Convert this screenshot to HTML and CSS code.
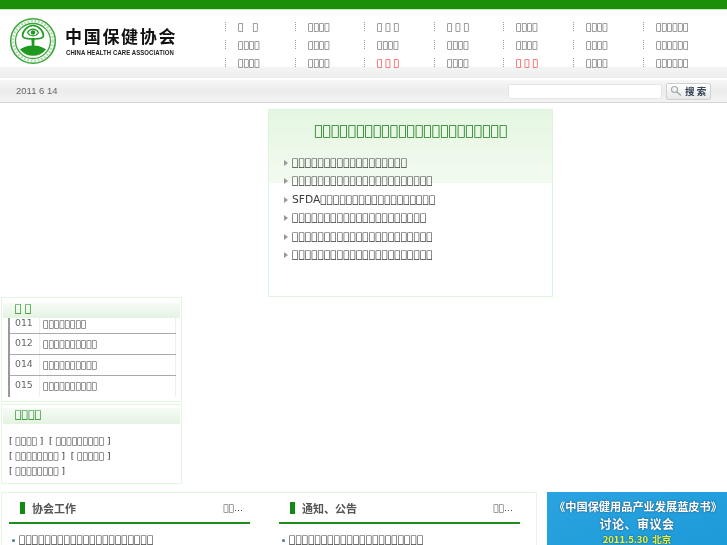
FILE: index.html
```html
<!DOCTYPE html>
<html lang="zh">
<head>
<meta charset="utf-8">
<title>中国保健协会</title>
<link rel="stylesheet" href="styles.css">
</head>
<body>
<div class="topbar"></div>
<header class="masthead">
  <div class="logo">
    <svg class="seal" width="48" height="48" viewBox="0 0 48 48">
      <circle cx="24" cy="24" r="22.300" fill="none" stroke="#3aa53a" stroke-width="1.600"/>
      <circle cx="24" cy="24" r="17.500" fill="none" stroke="#3aa53a" stroke-width="1.300"/>
      <circle cx="24" cy="24" r="19.900" fill="none" stroke="#b5deb5" stroke-width="2.600" stroke-dasharray="2 1.500"/>
      <path d="M11 32.500c5-3.500 9-4 13-4s8 .5 13 4a16.500 16.500 0 0 1-26 0z" fill="#1f9a1f"/>
      <path d="M22.300 21h3.400l-1 15h-1.400z" fill="#1f9a1f"/>
      <path d="M23 22c-5 0-9.500-.5-9.500-3.500c0-4.500 5-10 10.500-10s10.500 5.500 10.500 10c0 3-4.500 3.500-9.500 3.500" fill="none" stroke="#1f9a1f" stroke-width="1.700"/>
      <path d="M18.500 15.500c1.500-2.500 3.500-3.300 5.500-3.300s4 .8 5.500 3.300c-1.500 2.500-3.500 3.300-5.500 3.300s-4-.8-5.500-3.300z" fill="none" stroke="#1f9a1f" stroke-width="1.200"/>
      <circle cx="24" cy="15.500" r="2.200" fill="#1f9a1f"/>
    </svg>
    <div class="logo-words">
      <div class="logo-cn">中国保健协会</div>
      <div class="logo-en">CHINA HEALTH CARE ASSOCIATION</div>
    </div>
  </div>
  <nav class="nav">
    <a>&#xE000;&#8195;&#xE000;</a><a>&#xE000;&#xE000;&#xE000;&#xE000;</a><a>&#xE000; &#xE000; &#xE000;</a><a>&#xE000; &#xE000; &#xE000;</a><a>&#xE000;&#xE000;&#xE000;&#xE000;</a><a>&#xE000;&#xE000;&#xE000;&#xE000;</a><a>&#xE000;&#xE000;&#xE000;&#xE000;&#xE000;&#xE000;</a>
    <a>&#xE000;&#xE000;&#xE000;&#xE000;</a><a>&#xE000;&#xE000;&#xE000;&#xE000;</a><a>&#xE000;&#xE000;&#xE000;&#xE000;</a><a>&#xE000;&#xE000;&#xE000;&#xE000;</a><a>&#xE000;&#xE000;&#xE000;&#xE000;</a><a>&#xE000;&#xE000;&#xE000;&#xE000;</a><a>&#xE000;&#xE000;&#xE000;&#xE000;&#xE000;&#xE000;</a>
    <a>&#xE000;&#xE000;&#xE000;&#xE000;</a><a>&#xE000;&#xE000;&#xE000;&#xE000;</a><a class="hot">&#xE000; &#xE000; &#xE000;</a><a>&#xE000;&#xE000;&#xE000;&#xE000;</a><a class="hot">&#xE000; &#xE000; &#xE000;</a><a>&#xE000;&#xE000;&#xE000;&#xE000;</a><a>&#xE000;&#xE000;&#xE000;&#xE000;&#xE000;&#xE000;</a>
  </nav>
</header>
<div class="datebar">
  <span class="date">2011 6 14</span>
  <input class="search" type="text">
  <button class="search-btn">
    <svg width="12" height="12" viewBox="0 0 12 12"><circle cx="4.500" cy="4.500" r="3" fill="none" stroke="#9aa8a8" stroke-width="1.100"/><path d="M7 7l4 3.500" stroke="#9aa8a8" stroke-width="1.500"/></svg>
    <span>搜 索</span>
  </button>
</div>
<section class="feature">
  <h1>&#xE000;&#xE000;&#xE000;&#xE000;&#xE000;&#xE000;&#xE000;&#xE000;&#xE000;&#xE000;&#xE000;&#xE000;&#xE000;&#xE000;&#xE000;&#xE000;&#xE000;&#xE000;&#xE000;&#xE000;&#xE000;&#xE000;&#xE000;</h1>
  <ul>
    <li>&#xE000;&#xE000;&#xE000;&#xE000;&#xE000;&#xE000;&#xE000;&#xE000;&#xE000;&#xE000;&#xE000;&#xE000;&#xE000;&#xE000;&#xE000;&#xE000;&#xE000;&#xE000;</li>
    <li>&#xE000;&#xE000;&#xE000;&#xE000;&#xE000;&#xE000;&#xE000;&#xE000;&#xE000;&#xE000;&#xE000;&#xE000;&#xE000;&#xE000;&#xE000;&#xE000;&#xE000;&#xE000;&#xE000;&#xE000;&#xE000;&#xE000;</li>
    <li>SFDA&#xE000;&#xE000;&#xE000;&#xE000;&#xE000;&#xE000;&#xE000;&#xE000;&#xE000;&#xE000;&#xE000;&#xE000;&#xE000;&#xE000;&#xE000;&#xE000;&#xE000;&#xE000;</li>
    <li>&#xE000;&#xE000;&#xE000;&#xE000;&#xE000;&#xE000;&#xE000;&#xE000;&#xE000;&#xE000;&#xE000;&#xE000;&#xE000;&#xE000;&#xE000;&#xE000;&#xE000;&#xE000;&#xE000;&#xE000;&#xE000;</li>
    <li>&#xE000;&#xE000;&#xE000;&#xE000;&#xE000;&#xE000;&#xE000;&#xE000;&#xE000;&#xE000;&#xE000;&#xE000;&#xE000;&#xE000;&#xE000;&#xE000;&#xE000;&#xE000;&#xE000;&#xE000;&#xE000;&#xE000;</li>
    <li>&#xE000;&#xE000;&#xE000;&#xE000;&#xE000;&#xE000;&#xE000;&#xE000;&#xE000;&#xE000;&#xE000;&#xE000;&#xE000;&#xE000;&#xE000;&#xE000;&#xE000;&#xE000;&#xE000;&#xE000;&#xE000;&#xE000;</li>
  </ul>
</section>
<aside class="side">
  <div class="panel panel-phones">
    <h2>&#xE000; &#xE000;</h2>
    <table>
      <tr><td class="code">011</td><td>&#xE000;&#xE000;&#xE000;&#xE000;&#xE000;&#xE000;&#xE000;&#xE000;</td></tr>
      <tr><td class="code">012</td><td>&#xE000;&#xE000;&#xE000;&#xE000;&#xE000;&#xE000;&#xE000;&#xE000;&#xE000;&#xE000;</td></tr>
      <tr><td class="code">014</td><td>&#xE000;&#xE000;&#xE000;&#xE000;&#xE000;&#xE000;&#xE000;&#xE000;&#xE000;&#xE000;</td></tr>
      <tr><td class="code">015</td><td>&#xE000;&#xE000;&#xE000;&#xE000;&#xE000;&#xE000;&#xE000;&#xE000;&#xE000;&#xE000;</td></tr>
    </table>
  </div>
  <div class="panel panel-links">
    <h2>&#xE000;&#xE000;&#xE000;&#xE000;</h2>
    <p>[ &#xE000;&#xE000;&#xE000;&#xE000; ] &nbsp;[ &#xE000;&#xE000;&#xE000;&#xE000;&#xE000;&#xE000;&#xE000;&#xE000;&#xE000; ]</p>
    <p>[ &#xE000;&#xE000;&#xE000;&#xE000;&#xE000;&#xE000;&#xE000;&#xE000; ] &nbsp;[ &#xE000;&#xE000;&#xE000;&#xE000;&#xE000; ]</p>
    <p>[ &#xE000;&#xE000;&#xE000;&#xE000;&#xE000;&#xE000;&#xE000;&#xE000; ]</p>
  </div>
</aside>
<section class="lower">
  <div class="news">
    <div class="news-col">
      <div class="news-head"><i></i><b>协会工作</b><span>&#xE000;&#xE000;…</span></div>
      <div class="news-item">&#xE000;&#xE000;&#xE000;&#xE000;&#xE000;&#xE000;&#xE000;&#xE000;&#xE000;&#xE000;&#xE000;&#xE000;&#xE000;&#xE000;&#xE000;&#xE000;&#xE000;&#xE000;&#xE000;&#xE000;&#xE000;</div>
    </div>
    <div class="news-col">
      <div class="news-head"><i></i><b>通知、公告</b><span>&#xE000;&#xE000;…</span></div>
      <div class="news-item">&#xE000;&#xE000;&#xE000;&#xE000;&#xE000;&#xE000;&#xE000;&#xE000;&#xE000;&#xE000;&#xE000;&#xE000;&#xE000;&#xE000;&#xE000;&#xE000;&#xE000;&#xE000;&#xE000;&#xE000;&#xE000;</div>
    </div>
  </div>
  <div class="banner">
    <div class="banner-1">《中国保健用品产业发展蓝皮书》</div>
    <div class="banner-2">讨论、审议会</div>
    <div class="banner-3">2011.5.30&nbsp; 北京</div>
  </div>
</section>
</body>
</html>
```

FILE: styles.css
```css
html, body { margin: 0; padding: 0; height: 545px; overflow: hidden; }
html { background: #fff; }
body { font-family: "DejaVu Sans", sans-serif; font-size: 12px; color: #333; will-change: transform; }

.topbar { height: 9px; background: #1b8f08; border-bottom: 1px solid #c8efc0; }

.masthead { height: 68px; display: flex; background: linear-gradient(#fff 0, #fff 56px, #f3f5f4 57px, #ededed 68px); }
.logo { width: 225px; display: flex; padding: 7px 0 0 9px; box-sizing: border-box; gap: 8px; }
.seal { flex: none; }
.logo-words { padding-top: 8px; }
.logo-cn { font-family: "Noto Sans CJK SC", sans-serif; font-weight: 700; font-size: 17px; letter-spacing: 1.700px; line-height: 22px; color: #111; white-space: nowrap; }
.logo-en { font-family: "Liberation Sans", sans-serif; font-weight: 700; font-size: 8px; line-height: 10px; color: #222; white-space: nowrap; transform-origin: 0 0; transform: scaleX(.75); margin: 1px 0 0 1px; letter-spacing: .1px; }

.nav { flex: 1; display: grid; grid-template-columns: 70px 69px 70px 69px 70px 70px 70px; grid-auto-rows: 18px; padding-top: 8px; font-size: 9px; color: #444; }
.nav a { display: flex; align-items: center; padding-left: 13px; position: relative; white-space: pre; }
.nav a::before { content: ""; position: absolute; left: 0; top: 4px; height: 9px; border-left: 1px dotted #999; }
.nav a.hot { color: #f00; }

.datebar { height: 22px; margin-top: 2px; border-bottom: 1px solid #d5d5d5; display: flex; align-items: center; background: linear-gradient(#f7f7f7, #ececec 50%, #f4f4f4); }
.date { font-family: "Liberation Sans", sans-serif; font-size: 9.500px; color: #666; margin: 0 0 2px 16px; flex: 1; }
.search { width: 154px; height: 15px; box-sizing: border-box; border: 1px solid #e6e6e6; border-radius: 2px; background: #fff; padding: 0; margin: 0; }
.search-btn { width: 45px; height: 17px; margin: 0 16px 0 4px; padding: 0 0 0 3px; border: 1px solid #d0d0d0; border-radius: 2px; background: linear-gradient(#fff, #e8e8e8); display: flex; align-items: center; gap: 3px; font-family: "Noto Sans CJK SC", sans-serif; font-size: 9.500px; font-weight: 700; color: #345; }

.feature { width: 285px; height: 188px; box-sizing: border-box; position: absolute; left: 268px; top: 109px; border: 1px solid #dff4dd; background: linear-gradient(#e4f6e1, #f3fbf1 73px, #fff 73px); }
.feature h1 { margin: 10px 0 0; text-align: center; font-size: 14px; line-height: 20px; font-weight: 400; color: #1a7a1a; }
.feature ul { list-style: none; margin: 14px 0 0; padding: 0 0 0 23px; font-size: 10.670px; color: #3c3c3c; }
.feature li { line-height: 18.400px; position: relative; }
.feature li::before { content: ""; position: absolute; left: -8px; top: 6px; border: 3.500px solid transparent; border-left: 4px solid #999; border-right: 0; }

.side { position: absolute; left: 1px; top: 297px; width: 181px; }
.panel { border: 1px solid #e3f6e2; box-sizing: border-box; }
.panel h2 { margin: 5px 1px 0; height: 15px; line-height: 12px; font-size: 11px; font-weight: 400; color: #1c8a1c; padding-left: 12px; background: linear-gradient(#f6fbf5, #e4f3e2); position: relative; }
.panel-phones { height: 105px; }
.panel-phones table { border-collapse: collapse; margin: -4px 0 0 6px; width: 168px; font-size: 9px; line-height: 12px; border-left: 2px solid #999; border-right: 1px solid #eee; }
.panel-phones td { height: 20px; padding: 0 0 0 3px; border-bottom: 1px solid #aaa; }
.panel-phones td.code { width: 24px; height: 18px; padding: 0 0 2px 5px; font-size: 9.330px; color: #666; border-right: 1px solid #eee; }
.panel-phones tr:first-child td { height: 19px; }
.panel-phones tr:first-child td.code { height: 17px; }
.panel-phones tr:last-child td { border-bottom: 0; height: 19px; padding-bottom: 2px; }
.panel-phones tr:last-child td.code { height: 17px; padding-bottom: 4px; }
.panel-links { height: 80px; margin-top: 2px; padding-bottom: 2px; }
.panel-links h2 { margin-top: 3px; height: 16px; line-height: 14px; }
.panel-links p { margin: 0 0 0 7px; font-size: 9px; line-height: 15px; color: #333; white-space: pre-wrap; }
.panel-links h2 + p { margin-top: 10px; }

.lower { position: absolute; left: 1px; top: 492px; width: 726px; display: flex; }
.news { width: 536px; height: 60px; box-sizing: border-box; border: 1px solid #e3f6e2; display: flex; gap: 29px; padding-left: 7px; flex: none; }
.news-col { width: 241px; }
.news-head { border-bottom: 2px solid #1b8f1b; display: flex; align-items: center; padding: 0 7px 0 11px; box-sizing: border-box; height: 31px; }
.news-head i { width: 5px; height: 12px; background: #128a12; margin-right: 7px; }
.news-head b { flex: 1; font-family: "Noto Sans CJK SC", sans-serif; font-size: 11px; color: #555; }
.news-head span { font-size: 9px; color: #444; }
.news-item { font-size: 10.670px; padding: 9px 0 0 10px; position: relative; line-height: 14px; color: #3c3c3c; }
.news-item::before { content: ""; position: absolute; left: 3px; top: 15px; width: 3px; height: 3px; background: #47799a; border-radius: 50%; }

.banner { width: 180px; margin-left: 10px; height: 60px; background: linear-gradient(160deg, #2aa4e0, #1b9ad8); text-align: center; font-family: "Noto Sans CJK SC", sans-serif; color: #fff; font-weight: 700; text-shadow: 0 0 2px #246; }
.banner-1 { font-size: 11.200px; line-height: 15px; padding-top: 7px; white-space: nowrap; margin-left: 2px; }
.banner-2 { font-size: 12px; line-height: 17px; padding-top: 1px; letter-spacing: .5px; }
.banner-3 { font-size: 9.500px; line-height: 14px; color: #e6f53a; }
```
